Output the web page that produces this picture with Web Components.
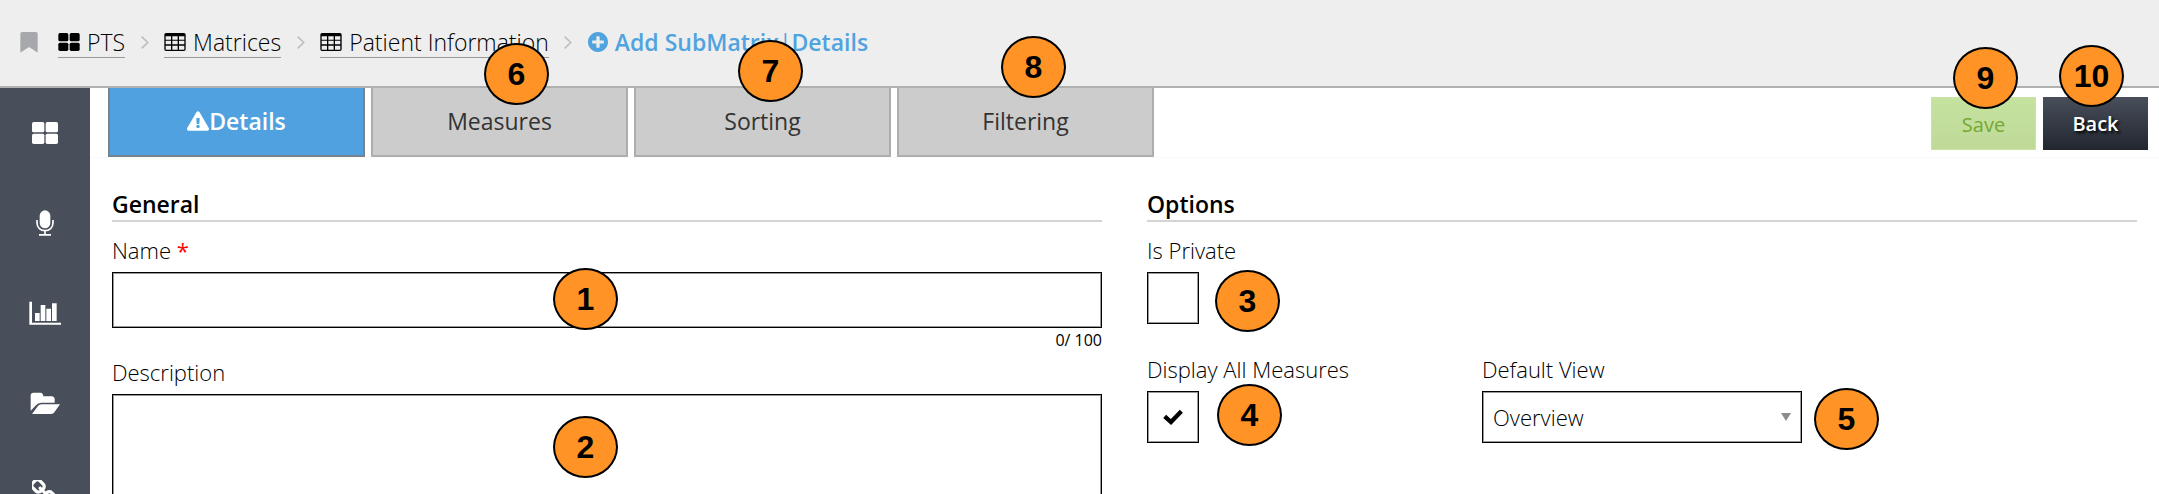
<!DOCTYPE html>
<html lang="en">
<head>
<meta charset="utf-8">
<title>Add SubMatrix | Details</title>
<style>
  html, body { margin: 0; height: 100%; }
  body { font: 300 22px/30px "Open Sans", "Liberation Sans", sans-serif; color: #000; background: #fff; overflow: hidden; }
</style>
</head>
<body>
<app-shell>
  <bread-crumbs slot="header"></bread-crumbs>
  <side-nav slot="nav"></side-nav>
  <tool-bar slot="tools">
    <tab-item active icon="warning">Details</tab-item>
    <tab-item>Measures<note-badge slot="note" style="--x:113px;--y:-45px">6</note-badge></tab-item>
    <tab-item>Sorting<note-badge slot="note" style="--x:104px;--y:-48px">7</note-badge></tab-item>
    <tab-item>Filtering<note-badge slot="note" style="--x:104px;--y:-52px">8</note-badge></tab-item>
    <action-button slot="actions" kind="save">Save<note-badge slot="note" style="--x:22px;--y:-50px">9</note-badge></action-button>
    <action-button slot="actions" kind="back">Back<note-badge slot="note" style="--x:16px;--y:-52px">10</note-badge></action-button>
  </tool-bar>
  <form-section heading="General">
    <text-field label="Name" required limit="100"><note-badge slot="note" style="--x:441px;--y:-4px">1</note-badge></text-field>
    <text-field label="Description" multiline><note-badge slot="note" style="--x:441px;--y:22px">2</note-badge></text-field>
  </form-section>
  <form-section heading="Options" columns>
    <check-field label="Is Private" wide><note-badge slot="note" style="--x:68px;--y:-2px">3</note-badge></check-field>
    <check-field label="Display All Measures" checked><note-badge slot="note" style="--x:70px;--y:-7px">4</note-badge></check-field>
    <select-field label="Default View" value="Overview"><note-badge slot="note" style="--x:332px;--y:-3px">5</note-badge></select-field>
  </form-section>
</app-shell>
<script>
const ICONS = {
  bookmark: [18, 21, '0 0 54 63', '<path fill="currentColor" d="M6 0H48Q53 0 53 5V61H51L27 45 3 61H1V5Q1 0 6 0Z"/>'],
  tiles: [22, 18, '0 0 66 54', '<g fill="currentColor"><rect x="1" width="30" height="25" rx="5"/><rect x="35" width="30" height="25" rx="5"/><rect x="1" y="29" width="30" height="25" rx="5"/><rect x="35" y="29" width="30" height="25" rx="5"/></g>'],
  bigtiles: [26, 22, '0 0 78 66', '<g fill="currentColor"><rect width="37" height="31" rx="5"/><rect x="41" width="37" height="31" rx="5"/><rect y="35" width="37" height="31" rx="5"/><rect x="41" y="35" width="37" height="31" rx="5"/></g>'],
  table: [22, 18, '0 0 66 54', '<path fill="currentColor" fill-rule="evenodd" d="M6 0H60Q65 0 65 5V49Q65 54 60 54H6Q1 54 1 49V5Q1 0 6 0ZM5 10V20H21V10ZM25 10V20H41V10ZM45 10V20H61V10ZM5 23V34H21V23ZM25 23V34H41V23ZM45 23V34H61V23ZM5 38V50H21V38ZM25 38V50H41V38ZM45 38V50H61V38Z"/>'],
  chevron: [8, 13, '0 0 24 39', '<path fill="none" stroke="currentColor" stroke-width="5" d="M2 2 20 19.500 2 37"/>'],
  plus: [20, 20, '8 8 496 496', '<path fill="currentColor" d="M256 8C119 8 8 119 8 256s111 248 248 248 248-111 248-248S393 8 256 8zm144 276c0 6.600-5.400 12-12 12h-92v92c0 6.600-5.400 12-12 12h-56c-6.600 0-12-5.400-12-12v-92h-92c-6.600 0-12-5.400-12-12v-56c0-6.600 5.400-12 12-12h92v-92c0-6.600 5.400-12 12-12h56c6.600 0 12 5.400 12 12v92h92c6.600 0 12 5.400 12 12v56z"/>'],
  warning: [22, 20, '0 0 576 512', '<path fill="currentColor" d="M569.517 440.013C587.975 472.007 564.806 512 527.940 512H48.054c-36.937 0-59.999-40.055-41.577-71.987L246.423 23.985c18.467-32.009 64.720-31.951 83.154 0l239.940 416.028zM288 354c-25.405 0-46 20.595-46 46s20.595 46 46 46 46-20.595 46-46-20.595-46-46-46zm-43.673-165.346l7.418 136c.347 6.364 5.609 11.346 11.982 11.346h48.546c6.373 0 11.635-4.982 11.982-11.346l7.418-136c.375-6.874-5.098-12.654-11.982-12.654h-63.383c-6.884 0-12.356 5.780-11.981 12.654z"/>'],
  mic: [18, 26, '0 0 54 78', '<rect x="11" y="1" width="32" height="54" rx="16" fill="currentColor"/><path fill="none" stroke="currentColor" stroke-width="5" d="M3 30V38C3 53 14 62 27 62S51 53 51 38V30M27 62V74M9 74.500H45"/>'],
  chart: [32, 24, '0 0 96 72', '<path fill="currentColor" d="M1 2H9V65H96V71H1ZM18 36H32V60H18ZM35 12H49V60H35ZM52 23H66V60H52ZM69 7H83V60H69Z"/>'],
  folder: [30, 23, '88 696 90 69', '<path fill="currentColor" d="M90 752V704Q92 698 98 698H120Q127 699 128 709H154Q161 710 162 716V728H122Q112 728 106 736ZM122 733H178L160 758Q156 762 150 762H94L112 738Q116 733 122 733Z"/>'],
  link: [26, 26, '128 128 1536 1536', '<path fill="currentColor" d="M1456 1216q0-40-28-68l-208-208q-28-28-68-28-42 0-72 32 3 3 19 18.500t21.500 21.500 15 19 13 25.500 3.500 27.500q0 40-28 68t-68 28q-15 0-27.500-3.500t-25.500-13-19-15-21.500-21.500-18.500-19q-33 31-33 73 0 40 28 68l206 207q27 27 68 27 40 0 68-26l147-146q28-28 28-67zm-703-705q0-40-28-68l-206-207q-28-28-68-28-39 0-68 27l-147 146q-28 28-28 67 0 40 28 68l208 208q27 27 68 27 42 0 72-31-3-3-19-18.500t-21.500-21.500-15-19-13-25.500-3.500-27.500q0-40 28-68t68-28q15 0 27.500 3.500t25.500 13 19 15 21.500 21.500 18.500 19q33-31 33-73zm895 705q0 120-85 203l-147 146q-83 83-203 83-121 0-204-85l-206-207q-83-83-83-203 0-123 88-209l-88-88q-86 88-208 88-120 0-204-84l-208-208q-84-84-84-204t85-203l147-146q83-83 203-83 121 0 204 85l206 207q83 83 83 203 0 123-88 209l88 88q86-88 208-88 120 0 204 84l208 208q84 84 84 204z"/>']
};
const icon = name => {
  const [w, h, box, body] = ICONS[name];
  return `<svg aria-hidden="true" width="${w}" height="${h}" viewBox="${box}">${body}</svg>`;
};

class Base extends HTMLElement {
  connectedCallback() {
    if (this.shadowRoot) return;
    this.attachShadow({ mode: 'open' }).innerHTML =
      `<style>*{box-sizing:border-box}svg{display:block;flex:none}${this.css()}</style>${this.html()}`;
  }
  css() { return ''; }
  html() { return '<slot></slot>'; }
}

customElements.define('app-shell', class extends Base {
  css() { return `
    :host{display:grid;grid-template:auto 1fr/90px 1fr;height:100vh;overflow:hidden}
    header{grid-column:1/3;background:#eee;border-bottom:2px solid #b0b0b0}
    aside{background:#484f5b;overflow:hidden}
    main{min-width:0}
    .form{display:grid;grid-template-columns:1fr 1fr;gap:45px;padding:30px 22px}`; }
  html() { return `<header><slot name="header"></slot></header><aside><slot name="nav"></slot></aside>
    <main><slot name="tools"></slot><div class="form"><slot></slot></div></main>`; }
});

customElements.define('bread-crumbs', class extends Base {
  css() { return `
    :host{display:block;padding:27px 20px 28px;font-size:23px;font-weight:350}
    nav{display:flex;align-items:flex-start}
    a{display:flex;align-items:center;gap:7px;color:#000;text-decoration:none;border-bottom:1px solid #999}
    .mark{color:#a7a8ac;border:0;height:31px;margin-right:20px}
    .sep{display:flex;align-items:center;justify-content:center;width:39px;height:31px;color:#bfbfbf}
    .here{display:flex;align-items:center;gap:7px;color:#4fa3df;font-weight:600}
    .here i{font-style:normal;font-weight:400}`; }
  html() {
    const sep = `<span class="sep">${icon('chevron')}</span>`;
    return `<nav aria-label="Breadcrumb"><a class="mark" href="#" aria-label="Bookmark">${icon('bookmark')}</a>
      <a href="#">${icon('tiles')}<span>PTS</span></a>${sep}
      <a href="#">${icon('table')}<span>Matrices</span></a>${sep}
      <a href="#">${icon('table')}<span>Patient Information</span></a>${sep}
      <span class="here">${icon('plus')}<span>Add SubMatrix<i>|</i>Details</span></span></nav>`;
  }
});

customElements.define('side-nav', class extends Base {
  css() { return `:host{display:block}a{display:flex;height:90px;align-items:center;justify-content:center;color:#fff}`; }
  html() {
    return '<nav>' + [['bigtiles', 'Dashboard'], ['mic', 'Voice'], ['chart', 'Reports'], ['folder', 'Files'], ['link', 'Links']]
      .map(([n, l]) => `<a href="#" aria-label="${l}">${icon(n)}</a>`).join('') + '</nav>';
  }
});

customElements.define('tool-bar', class extends Base {
  css() { return `
    :host{display:flex;justify-content:space-between;align-items:flex-start;padding:0 11px 0 18px;border-bottom:1px solid #fafafa}
    .tabs{display:flex;gap:6px}
    .actions{display:flex;gap:7px;padding-top:9px}`; }
  html() { return `<div class="tabs"><slot></slot></div><div class="actions"><slot name="actions"></slot></div>`; }
});

customElements.define('tab-item', class extends Base {
  css() { return `
    :host{display:block;position:relative;width:257px}
    button{display:flex;align-items:center;justify-content:center;width:100%;height:69px;padding:0 0 2px;font:400 23px/30px "Open Sans",sans-serif;color:#333;background:#ccc;border:2px solid #adadad;border-top:0}
    :host([active]) button{background:#4fa2df;color:#fff;font-weight:600;border-color:#77838d}`; }
  html() { const i = this.getAttribute('icon'); return `<button type="button">${i ? icon(i) : ''}<slot></slot></button><slot name="note"></slot>`; }
});

customElements.define('action-button', class extends Base {
  css() { return `
    :host{display:block;position:relative;width:105px}
    button{display:block;width:100%;height:53px;padding:0;border:0;font:500 20px/30px "Open Sans",sans-serif}
    :host([kind=save]) button{color:#74a832;background:linear-gradient(#c6e29f,#bfda98);border:1px solid #c9e4a4;padding-top:3px}
    :host([kind=back]) button{color:#fff;font-weight:600;background:linear-gradient(#484f5b,#22262f);text-shadow:2px 2px 3px #000}`; }
  html() { return `<button type="button"><slot></slot></button><slot name="note"></slot>`; }
});

customElements.define('form-section', class extends Base {
  css() { return `
    :host{display:block;min-width:0}
    h2{margin:0 0 13px;font:600 23px/32px "Open Sans",sans-serif;color:#000;border-bottom:2px solid #d4d4d4}
    .body{display:grid;row-gap:5px}
    :host([columns]) .body{grid-template-columns:repeat(3,1fr);gap:30px 15px}`; }
  html() { return `<h2>${this.getAttribute('heading')}</h2><div class="body"><slot></slot></div>`; }
});

const FIELD = `
  :host{display:block}
  label{display:block;margin-bottom:7px}
  .control{position:relative}
  input,textarea,select{display:block;margin:0;border:1px solid #000;box-shadow:inset 0 0 0 1px #999;border-radius:0;background:#fff;font:inherit;color:inherit;appearance:none}`;

customElements.define('text-field', class extends Base {
  css() { return FIELD + `
    input,textarea{width:100%;padding:0 10px;resize:none}
    input{height:56px}textarea{height:200px}
    em{font-style:normal;color:#f00;font-weight:400}
    .count{text-align:right;font-size:16px;line-height:24px;font-weight:400}`; }
  html() {
    const a = n => this.getAttribute(n), has = n => this.hasAttribute(n);
    return `<label for="c">${a('label')}${has('required') ? ' <em>*</em>' : ''}</label>
      <div class="control">${has('multiline') ? '<textarea id="c"></textarea>' : '<input id="c" type="text">'}<slot name="note"></slot></div>
      ${has('limit') ? `<div class="count">0/ ${a('limit')}</div>` : ''}`;
  }
});

customElements.define('check-field', class extends Base {
  css() { return FIELD + `
    :host([wide]){grid-column:1/-1}
    .control{display:grid;width:52px}
    input,svg{grid-area:1/1}
    input{width:52px;height:52px}
    svg{place-self:center;pointer-events:none;visibility:hidden}
    input:checked+svg{visibility:visible}`; }
  html() { return `<label for="c">${this.getAttribute('label')}</label>
    <div class="control"><input id="c" type="checkbox"${this.hasAttribute('checked') ? ' checked' : ''}>
    <svg aria-hidden="true" width="20" height="16" viewBox="0 0 60 48"><path fill="none" stroke="#000" stroke-width="13" stroke-linejoin="miter" d="M5 22 24 39 55 7"/></svg><slot name="note"></slot></div>`; }
});

customElements.define('select-field', class extends Base {
  css() { return FIELD + `
    .control{display:grid;align-items:center}
    select,svg{grid-area:1/1}
    select{width:100%;height:52px;padding:0 40px 0 10px}
    svg{justify-self:end;margin-right:11px;pointer-events:none}`; }
  html() { return `<label for="c">${this.getAttribute('label')}</label>
    <div class="control"><select id="c"><option>${this.getAttribute('value')}</option></select>
    <svg aria-hidden="true" width="10" height="8" viewBox="0 0 10 8"><path fill="#8c8c8c" d="M0 0H10L5 8Z"/></svg><slot name="note"></slot></div>`; }
});

customElements.define('note-badge', class extends Base {
  css() { return `
    :host{position:absolute;left:var(--x);top:var(--y);z-index:2;display:flex;align-items:center;justify-content:center;box-sizing:border-box;width:65px;height:62px;border:2px solid #000;border-radius:50%;background:#ff9326;color:#000;font:700 32px/36px "Liberation Sans",Arial,sans-serif;text-shadow:none}`; }
});
</script>
</body>
</html>
